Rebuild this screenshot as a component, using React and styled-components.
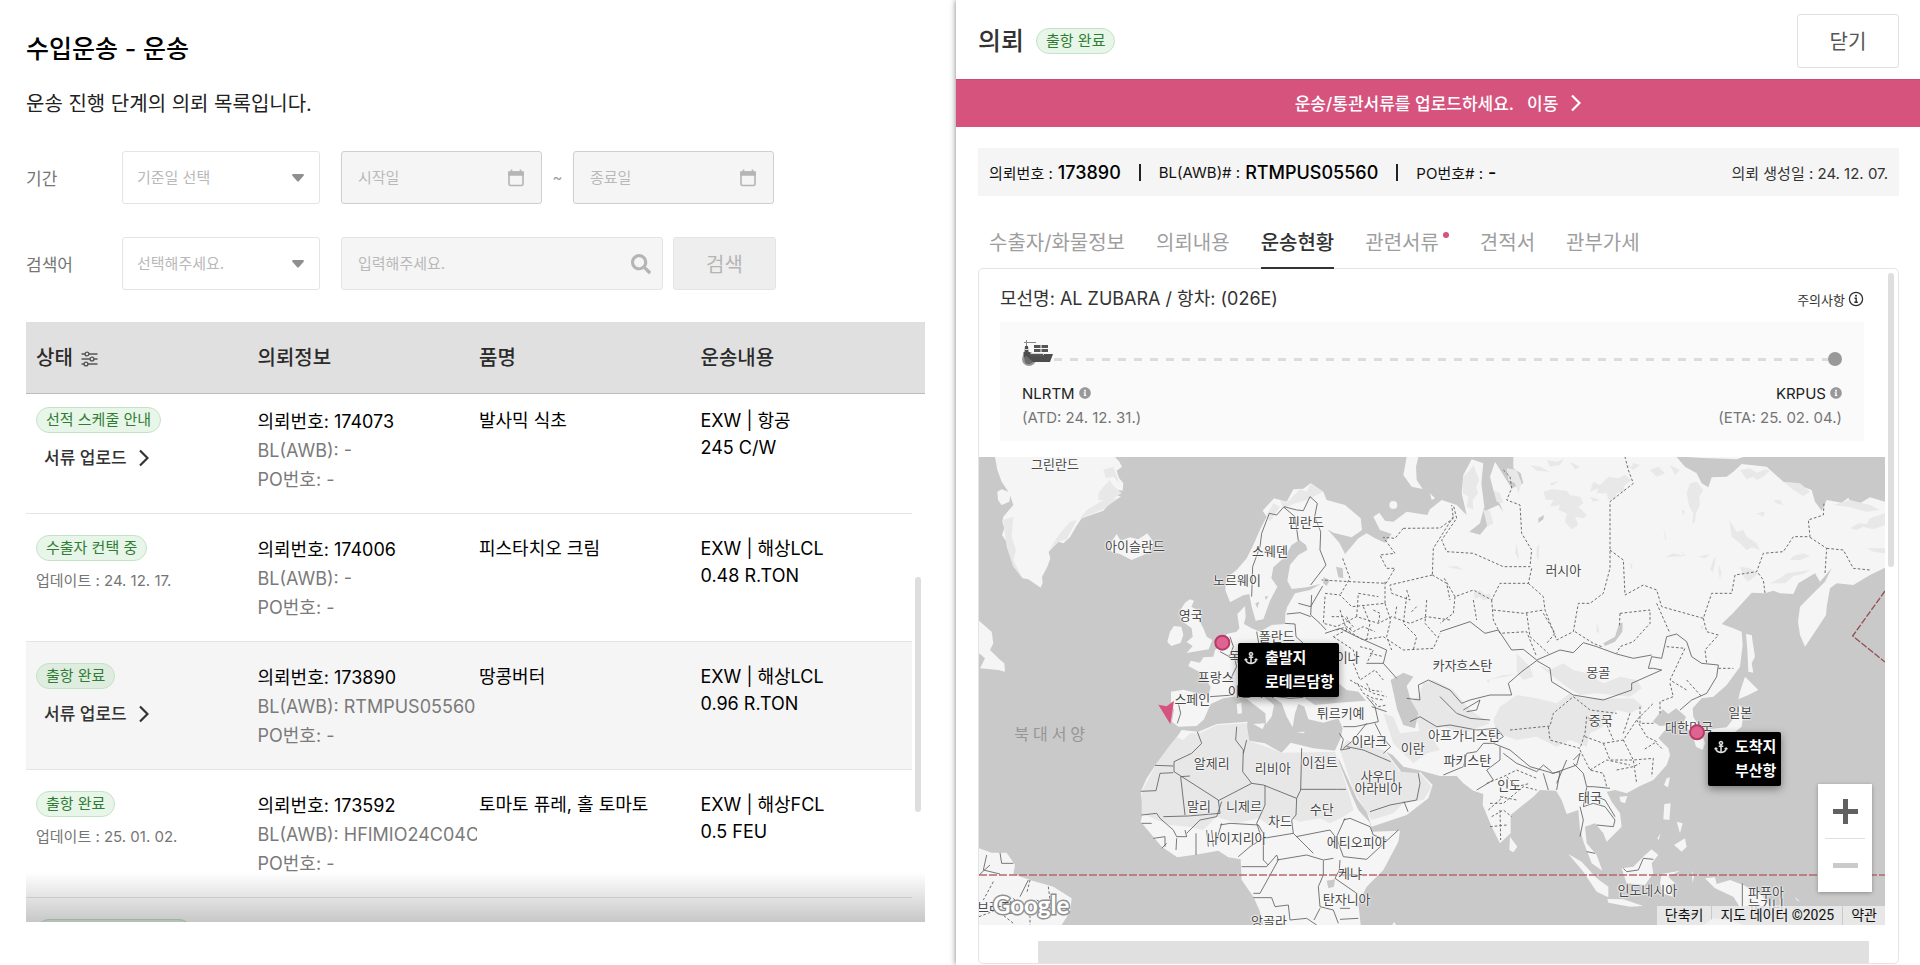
import React, { useState } from 'react';
import styled, { createGlobalStyle, css } from 'styled-components';
import { FaAnchor, FaInfoCircle, FaSearch } from 'react-icons/fa';

const GlobalStyle = createGlobalStyle`
  * {
    box-sizing: border-box;
  }
  body {
    margin: 0;
    background: #fff;
    color: #212121;
    font-family: Inter, 'Noto Sans CJK KR', sans-serif;
    font-size: 17px;
  }
  button,
  input,
  select {
    font-family: inherit;
  }
`;

const Layout = styled.div`
  display: grid;
  grid-template-columns: minmax(0, 956fr) minmax(0, 964fr);
  height: 100vh;
  min-height: 700px;
  overflow: hidden;
`;

/* ---------- list side ---------- */

const ListPane = styled.main`
  display: flex;
  flex-direction: column;
  min-height: 0;
  padding: 31px 31px 43px 26px;
`;

const PageTitle = styled.h1`
  margin: 0;
  font-size: 25px;
  line-height: 36px;
  font-weight: 500;
  color: #000;
`;

const PageLead = styled.p`
  margin: 23px 0 33px;
  font-size: 20px;
  line-height: 28px;
`;

const Filters = styled.form`
  display: flex;
  flex-direction: column;
  gap: 33px;
  margin-bottom: 32px;
`;

const FilterRow = styled.div`
  display: flex;
  align-items: center;
`;

const FilterLabel = styled.label`
  flex: 0 0 96px;
  color: #757575;
`;

const Field = styled.div`
  position: relative;
  flex: 0 1 ${(p) => p.$width}px;
  height: 53px;
  margin-right: ${(p) => p.$gap || 0}px;
  svg {
    position: absolute;
    top: 50%;
    right: ${(p) => p.$iconRight || 16}px;
    transform: translateY(-50%);
    color: ${(p) => p.$iconColor || '#b5b5b5'};
    pointer-events: none;
  }
`;

const controlBase = css`
  width: 100%;
  height: 100%;
  padding: 0 16px;
  border: 1px solid #e4e4e4;
  border-radius: 3px;
  font-size: 15px;
  color: #b9b9b9;
  opacity: 1;
`;

const Select = styled.select`
  ${controlBase}
  padding: 0 14px;
  appearance: none;
  background: #fff;
`;

const TextInput = styled.input`
  ${controlBase}
  background: #f5f5f5;
  border-color: ${(p) => (p.$strong ? '#cfcfcf' : '#e4e4e4')};
  &::placeholder {
    color: #b9b9b9;
    opacity: 1;
  }
`;

const Tilde = styled.span`
  flex: 0 0 31px;
  text-align: center;
  font-size: 15px;
  color: #9e9e9e;
`;

const SearchButton = styled.button`
  width: 103px;
  height: 53px;
  border: 1px solid #e4e4e4;
  border-radius: 3px;
  background: #eee;
  color: #b5b5b5;
  font-size: 20px;
`;

const TableBox = styled.section`
  position: relative;
  flex: 1;
  min-height: 0;
  overflow: hidden;
  &::after {
    content: '';
    position: absolute;
    inset: auto 0 0 0;
    height: 50px;
    background: linear-gradient(rgba(0, 0, 0, 0), rgba(0, 0, 0, 0.22));
  }
`;

const Table = styled.table`
  width: 100%;
  table-layout: fixed;
  border-collapse: separate;
  border-spacing: 0;
  text-align: left;
`;

const Th = styled.th`
  height: 72px;
  padding: 0 0 2px 10px;
  border-bottom: 1px solid #bdbdbd;
  background: #e0e0e0;
  color: #2b2b2b;
  font-size: 20px;
  font-weight: 500;
  svg {
    margin-left: 8px;
    vertical-align: -2px;
  }
`;

const ThGutter = styled.td`
  width: 13px;
  padding: 0;
  border-bottom: 1px solid #bdbdbd;
  background: #e0e0e0;
`;

const Td = styled.td`
  height: 128px;
  padding: 21px 0 0 10px;
  border-bottom: 1px solid #e4e4e4;
  vertical-align: top;
  font-size: 18px;
  line-height: 27px;
  color: #000;
`;

const Tr = styled.tr`
  background: ${(p) => (p.$selected ? '#f5f5f5' : '#fff')};
  &:first-child ${Td} {
    height: 120px;
    padding-top: 13px;
  }
`;

const Badge = styled.span`
  display: block;
  width: fit-content;
  min-width: ${(p) => p.$minWidth || 0}px;
  height: 26px;
  padding: 0 9px;
  border: 1px solid #c3e3c6;
  border-radius: 13px;
  background: ${(p) => (p.$dim ? '#deeddf' : '#e8f5e9')};
  color: #2e7d32;
  font-size: 15px;
  line-height: 24px;
  white-space: nowrap;
`;

const Updated = styled.div`
  margin-top: 8px;
  font-size: 15px;
  line-height: 24px;
  color: #757575;
`;

const UploadLink = styled.a`
  display: flex;
  align-items: center;
  gap: 12px;
  width: fit-content;
  margin-top: 12px;
  padding-left: 8px;
  font-size: 17px;
  line-height: 26px;
  font-weight: 500;
  color: #333;
  text-decoration: none;
`;

const InfoLine = styled.div`
  margin-right: -8px;
  overflow: hidden;
  white-space: nowrap;
  line-height: 29px;
  color: ${(p) => (p.$main ? '#000' : '#7a7a7a')};
`;

const Thumb = styled.div`
  position: absolute;
  top: ${(p) => p.$top}px;
  right: 4px;
  width: 6px;
  height: ${(p) => p.$height}px;
  border-radius: 3px;
  background: #dedede;
`;

/* ---------- detail side ---------- */

const DetailPane = styled.aside`
  display: flex;
  flex-direction: column;
  min-height: 0;
  background: #fff;
  box-shadow: 0 0 6px rgba(0, 0, 0, 0.5);
  z-index: 1;
`;

const DetailHead = styled.header`
  display: flex;
  align-items: center;
  gap: 12px;
  height: 79px;
  flex: none;
  padding: 2px 21px 0 22px;
`;

const DetailTitle = styled.h2`
  margin: 0;
  font-size: 25px;
  line-height: 36px;
  font-weight: 500;
  color: #333;
`;

const CloseButton = styled.button`
  width: 102px;
  height: 54px;
  margin-left: auto;
  border: 1px solid #e0e0e0;
  border-radius: 3px;
  background: #fff;
  color: #555;
  font-size: 20px;
`;

const Banner = styled.a`
  display: flex;
  align-items: center;
  justify-content: center;
  gap: 13px;
  flex: none;
  height: 48px;
  padding-bottom: 2px;
  border-top: 1px solid #c64c76;
  background: #d6537e;
  color: #fff;
  font-weight: 500;
  text-decoration: none;
`;

const Summary = styled.div`
  display: flex;
  align-items: center;
  flex: none;
  height: 48px;
  margin: 21px 21px 0 22px;
  padding: 0 11px;
  background: #f5f5f5;
  font-size: 15px;
  color: #111;
  white-space: nowrap;
  strong {
    margin-left: 5px;
    font-size: 18px;
    font-weight: 500;
    color: #000;
  }
`;

const SummaryItem = styled.span`
  display: flex;
  align-items: center;
  & + & {
    margin-left: 18px;
  }
  & + &::before {
    content: '';
    width: 2px;
    height: 17px;
    margin-right: 18px;
    background: #222;
  }
`;

const Created = styled.span`
  margin-left: auto;
  color: #333;
`;

const Tabs = styled.div`
  display: flex;
  gap: 31px;
  flex: none;
  height: 53px;
  margin: 20px 21px -1px 22px;
  padding-left: 11px;
  z-index: 1;
`;

const Tab = styled.button`
  padding: 0;
  border: 0;
  border-bottom: 2px solid ${(p) => (p.$active ? '#333' : 'transparent')};
  background: none;
  font-size: 20px;
  font-weight: ${(p) => (p.$active ? 500 : 400)};
  color: ${(p) => (p.$active ? '#333' : '#9e9e9e')};
  cursor: pointer;
`;

const NewDot = styled.i`
  display: inline-block;
  width: 6px;
  height: 6px;
  margin-left: 4px;
  border-radius: 50%;
  background: #d6537e;
  vertical-align: 12px;
`;

const Card = styled.section`
  position: relative;
  flex: 1;
  min-height: 0;
  margin: 0 21px 1px 22px;
  padding-right: 13px;
  border: 1px solid #e4e4e4;
  border-radius: 5px;
  overflow: hidden;
`;

const VesselRow = styled.div`
  display: flex;
  justify-content: space-between;
  align-items: center;
  padding: 14px 21px 7px;
  font-size: 18px;
  line-height: 32px;
  color: #333;
`;

const NoticeButton = styled.button`
  display: flex;
  align-items: center;
  gap: 3px;
  padding: 0;
  border: 0;
  background: none;
  font-size: 13px;
  color: #333;
`;

const Route = styled.div`
  margin: 0 21px 16px;
  padding: 30px 22px 11px;
  background: #fafafa;
`;

const Track = styled.div`
  display: flex;
  align-items: center;
  height: 14px;
  margin-bottom: 16px;
`;

const ShipIcon = styled.svg`
  flex: none;
  width: 32px;
  height: 26px;
  margin-top: -12px;
`;

const Dashes = styled.div`
  flex: 1;
  height: 3px;
  background: repeating-linear-gradient(90deg, #dcdcdc 0 8px, transparent 8px 16px);
`;

const EndDot = styled.span`
  width: 14px;
  height: 14px;
  border-radius: 50%;
  background: #999;
`;

const Ports = styled.div`
  display: flex;
  justify-content: space-between;
  font-size: 15px;
  line-height: 24px;
  color: #757575;
`;

const Port = styled.div`
  text-align: ${(p) => p.$align || 'left'};
  strong {
    display: block;
    font-weight: 400;
    color: #212121;
  }
  svg {
    margin-left: 4px;
    font-size: 12px;
    color: #999;
  }
`;

const MapBox = styled.div`
  position: relative;
  width: 100%;
  aspect-ratio: 906 / 468;
  overflow: hidden;
  background: #c9c9c9;
`;

const MapSvg = styled.svg`
  display: block;
  width: 100%;
  height: 100%;
  stroke-linejoin: round;
`;

const MapLabel = styled.span`
  position: absolute;
  left: ${(p) => ((p.$x - 27) / 2718) * 100}%;
  top: ${(p) => ((p.$y - 21) / 1404) * 100}%;
  transform: translate(-50%, -50%);
  font-family: Roboto, 'Noto Sans CJK KR', sans-serif;
  font-size: ${(p) => (p.$sea ? 16 : 13)}px;
  line-height: 12px;
  letter-spacing: ${(p) => (p.$sea ? 4 : 0)}px;
  text-align: center;
  white-space: pre;
  color: ${(p) => (p.$sea ? '#969696' : '#4a4a4a')};
  text-shadow: ${(p) => (p.$sea ? 'none' : '0 0 2px #fff, 0 0 2px #fff, 0 0 2px #fff')};
`;

const PortPopup = styled.div`
  position: absolute;
  left: ${(p) => ((p.$x - 27) / 2718) * 100}%;
  top: ${(p) => ((p.$y - 21) / 1404) * 100}%;
  display: flex;
  gap: 7px;
  padding: 3px 5px 3px 6px;
  border-radius: 2px;
  background: #000;
  box-shadow: 0 3px 8px rgba(0, 0, 0, 0.4);
  color: #fff;
  font-size: 15px;
  font-weight: 600;
  line-height: 24px;
  white-space: nowrap;
  svg {
    margin-top: 5px;
    font-size: 14px;
    color: #ddd;
  }
`;

const ZoomControl = styled.div`
  position: absolute;
  right: 13px;
  bottom: 33px;
  width: 54px;
  background: #fff;
  box-shadow: 0 1px 4px rgba(0, 0, 0, 0.3);
`;

const ZoomButton = styled.button`
  display: flex;
  align-items: center;
  justify-content: center;
  width: 40px;
  height: 54px;
  margin: 0 7px;
  padding: 0;
  border: 0;
  background: none;
  color: ${(p) => (p.disabled ? '#cacaca' : '#616161')};
  & + & {
    border-top: 1px solid #e0e0e0;
  }
`;

const GoogleMark = styled.span`
  position: absolute;
  left: 14px;
  bottom: 4px;
  font-family: Lato, sans-serif;
  font-size: 24px;
  line-height: 32px;
  font-weight: 700;
  color: #fff;
  -webkit-text-stroke: 3px #909090;
  paint-order: stroke fill;
`;

const Attribution = styled.div`
  position: absolute;
  right: 0;
  bottom: 0;
  display: flex;
  gap: 1px;
  font-family: Roboto, 'Noto Sans CJK KR', sans-serif;
  font-size: 14px;
  line-height: 19px;
  span,
  a {
    padding: 0 8px;
    background: rgba(240, 240, 240, 0.75);
    color: #111;
    text-decoration: none;
  }
`;

const NextBlock = styled.div`
  height: 240px;
  margin: 16px 16px 0 59px;
  background: #e0e0e0;
`;

/* ---------- icons ---------- */

const Caret = () => (
  <svg width="12" height="8" viewBox="0 0 12 8" aria-hidden="true">
    <path d="M1 0h10q1.500 .6 .6 1.800L7 7q-1 1-2 0L.4 1.800Q-.4 .6 1 0z" fill="currentColor" />
  </svg>
);

const CalendarIcon = () => (
  <svg width="16" height="18" viewBox="0 0 16 18" aria-hidden="true">
    <rect x="1" y="3" width="14" height="13.500" rx="1.500" fill="none" stroke="currentColor" strokeWidth="1.600" />
    <path d="M1 3h14v3H1zM3.500 .5v3M12.500 .5v3" fill="currentColor" stroke="currentColor" strokeWidth="1.600" />
  </svg>
);

const SlidersIcon = () => (
  <svg width="17" height="16" viewBox="0 0 17 16" fill="none" stroke="#555" strokeWidth="1.400" aria-hidden="true">
    <path d="M.5 3H4M8 3h8.500M.5 8H9M13 8h3.500M.5 13H3M7 13h9.500" />
    <circle cx="6" cy="3" r="1.900" />
    <circle cx="11" cy="8" r="1.900" />
    <circle cx="5" cy="13" r="1.900" />
  </svg>
);

const Chevron = () => (
  <svg width="10" height="18" viewBox="0 0 10 18" fill="none" stroke="currentColor" strokeWidth="2.200" aria-hidden="true">
    <path d="M1 1.500L8.500 9 1 16.500" />
  </svg>
);

const NoticeIcon = () => (
  <svg width="16" height="16" viewBox="0 0 16 16" fill="none" stroke="#333" aria-hidden="true">
    <circle cx="8" cy="8" r="6.600" strokeWidth="1.300" />
    <path d="M6.500 7.200H8.200V11M6.300 11.200h3.600" strokeWidth="1.400" />
    <circle cx="8" cy="4.800" r="1" fill="#333" stroke="none" />
  </svg>
);

const Ship = () => (
  <ShipIcon viewBox="0 0 32 26" aria-hidden="true">
    <circle cx="7" cy="19" r="7" fill="#999" />
    <path d="M4.500 0v8M2 2.500h12" stroke="#888" strokeWidth="1" fill="none" />
    <path d="M3 6h3l.6 6h1.400l1 3.500h12l1-1.500h9L28 22H4L1.500 15V12h1z" fill="#4d4d4d" />
    <path d="M12 5h6.500v3H12zM19.500 5H26v3h-6.500zM12 9h6.500v3H12zM19.500 9H26v3h-6.500zM9 13h12v3H9z" fill="#555" />
    <path d="M3 9.500h3.500M9 13.500h13" stroke="#e4e4e4" strokeWidth=".9" />
    <path d="M4 15.500a7 7 0 0 0 0 8a6 6 0 0 0 7-1.500z" fill="#6b6b6b" />
  </ShipIcon>
);

/* ---------- map shapes ---------- */

const LAND = [
  // Greenland
  'M75 21L82 60 95 95 118 130 130 165 100 200 97 215 103 235 96 255 112 280 114 300 122 318 135 355 158 385 175 388 200 405 212 413 218 398 216 380 232 350 241 325 236 305 265 275 280 280 300 262 318 230 335 205 400 182 420 160 453 140 430 132 400 125 430 118 458 122 460 100 447 84 440 62 456 50 448 35 435 21Z',
  'M82 125L95 118 122 128 118 155 95 165 84 150Z',
  // Iceland
  'M418 285L440 252 452 272 480 262 505 268 532 250 550 275 545 300 520 315 485 330 450 312 425 306Z',
  // British Isles
  'M628 485L645 458 660 448 672 452 664 470 695 488 690 515 700 535 710 560 727 570 716 598 680 604 650 609 668 588 650 576 668 560 665 535 645 520 634 508Z',
  'M600 545L612 528 634 530 640 555 632 578 604 588 592 575Z',
  // Eurasia
  'M625 830L606 815 612 780 603 755 603 725 640 719 715 738 722 712 700 672 655 648 662 632 690 638 700 622 730 620 735 600 755 585 770 552 800 545 808 535 802 492 825 468 827 500 822 522 845 535 870 545 905 525 945 522 946 490 952 470 975 430 1020 420 1052 402 1010 412 965 417 952 392 960 345 985 315 1012 300 1008 285 988 270 965 285 945 320 910 352 904 385 922 410 900 452 880 508 857 512 845 470 838 432 820 436 780 457 766 420 768 385 800 360 830 325 850 285 872 235 890 200 878 182 912 145 950 155 970 118 1000 116 1022 100 1060 125 1070 150 1125 165 1172 205 1176 240 1145 262 1090 248 1072 238 1108 278 1125 312 1140 295 1165 265 1190 250 1215 265 1245 278 1265 252 1230 240 1210 200 1228 188 1245 212 1270 215 1310 185 1372 195 1380 178 1415 150 1460 165 1490 195 1475 130 1480 75 1505 28 1540 40 1534 100 1543 170 1530 220 1498 245 1530 254 1562 215 1552 180 1585 165 1600 185 1570 120 1560 80 1575 35 1600 75 1625 115 1660 100 1652 70 1630 55 1630 21 2120 21 2145 50 2180 70 2195 100 2215 112 2225 82 2270 80 2290 65 2315 42 2390 50 2440 95 2485 105 2525 120 2535 155 2555 182 2570 150 2615 158 2635 143 2650 172 2700 142 2745 155 2745 353 2700 375 2650 405 2600 400 2580 415 2570 470 2568 495 2545 530 2505 590 2490 555 2484 515 2490 470 2530 430 2565 395 2585 355 2550 395 2535 370 2485 400 2470 432 2430 430 2410 422 2385 430 2345 428 2290 488 2255 522 2290 535 2315 545 2318 585 2310 650 2270 705 2230 740 2195 745 2168 775 2170 800 2190 835 2205 880 2198 900 2178 890 2168 855 2140 820 2148 800 2118 775 2095 792 2078 778 2060 800 2048 815 2070 828 2098 825 2065 865 2095 895 2100 915 2090 945 2050 990 2010 1008 1970 1030 1935 1020 1910 1025 1925 1055 1950 1090 1955 1130 1910 1175 1900 1150 1875 1120 1845 1130 1850 1180 1880 1215 1897 1262 1865 1240 1842 1180 1830 1140 1825 1080 1790 1092 1775 1050 1758 1022 1710 1020 1690 1040 1622 1095 1622 1150 1590 1180 1565 1130 1538 1065 1540 1032 1510 1022 1480 1000 1460 978 1410 978 1345 960 1300 950 1268 915 1248 905 1290 960 1305 990 1335 988 1350 965 1388 1005 1375 1045 1310 1095 1205 1130 1190 1085 1160 1045 1108 930 1090 912 1112 865 1118 835 1105 805 1060 818 1015 808 1003 770 985 762 975 790 968 832 950 800 935 760 885 725 868 705 862 725 912 765 905 800 888 822 886 790 845 758 820 738 790 740 760 745 722 762 702 808 680 828Z',
  // Africa
  'M635 840L685 845 740 822 832 815 830 850 838 872 885 880 935 908 962 878 1030 895 1098 902 1108 940 1145 1035 1165 1080 1200 1118 1205 1145 1290 1142 1285 1175 1240 1260 1190 1310 1165 1360 1172 1425 880 1425 868 1380 850 1340 815 1290 812 1228 775 1222 745 1202 690 1212 622 1222 575 1190 512 1115 520 1080 512 1025 530 985 560 940 600 890Z',
  // Mediterranean islands
  'M800 762L814 758 816 790 803 792ZM850 822L885 820 878 838Z',
  'M980 846L1005 845 1000 850Z',
  // Novaya Zemlya and neighbours
  'M1310 21L1300 75 1325 110 1358 117 1340 90 1338 50 1345 21ZM1380 130L1395 145 1385 150ZM1258 165a12 12 0 1 0 24 0a12 12 0 1 0-24 0Z',
  'M2150 21L2320 21 2300 28 2200 24Z',
  // Sakhalin, Japan
  'M2328 552L2345 555 2355 620 2345 640 2350 668 2335 665 2332 600ZM2325 680L2365 720 2335 735 2305 748 2310 725Z',
  'M2308 765L2322 780 2315 830 2290 850 2225 850 2215 838 2270 832 2295 800Z',
  // south-east Asia
  'M2090 985L2100 982 2094 1012 2082 1005ZM1948 1040L1972 1038 1965 1060 1952 1055Z',
  'M2083 1062L2102 1060 2098 1110 2080 1108ZM2120 1115L2138 1120 2130 1150ZM2112 1185L2145 1165 2150 1190 2135 1205ZM2062 1165L2072 1150 2066 1170Z',
  'M1620 1160L1642 1190 1630 1207 1618 1200Z',
  'M1795 1212L1835 1235 1880 1285 1915 1310 1915 1342 1880 1325 1840 1265Z',
  'M1912 1347L1960 1348 2020 1368 1980 1370 1915 1358Z',
  'M1955 1255L1990 1250 2025 1215 2045 1198 2065 1215 2045 1240 2050 1270 2025 1305 1970 1300Z',
  'M2075 1272L2130 1262 2095 1280 2115 1300 2098 1305 2108 1340 2078 1330 2070 1300ZM2165 1262L2172 1280 2168 1300Z',
  'M2205 1285L2235 1282 2240 1302 2280 1290 2320 1305 2375 1335 2400 1370 2350 1365 2310 1372 2290 1340 2235 1315Z',
  'M2200 1425L2230 1405 2290 1412 2320 1425ZM2475 1340L2490 1355 2480 1350Z',
  'M1267 1425L1272 1415 1278 1425Z',
  // Newfoundland
  'M27 512L65 545 70 580 60 600 85 625 103 640 105 665 85 660 30 655 45 625 27 610Z',
  // South America
  'M27 1195L65 1208 110 1208 135 1245 130 1272 180 1290 250 1310 305 1345 300 1385 275 1425 27 1425Z',
];

const ARID = [
  'M600 885L620 862 640 870 660 850 690 850 740 825 830 820 838 872 935 908 1095 905 1140 1040 1150 1080 1120 1100 1080 1120 1050 1105 990 1115 950 1100 905 1130 890 1120 865 1105 800 1120 740 1100 700 1140 655 1130 600 1125 560 1110 515 1090 515 1025 560 940Z',
  'M1110 900L1130 870 1240 900 1290 965 1350 970 1385 1010 1360 1050 1300 1060 1270 1090 1205 1110 1150 1020Z',
  'M1310 760L1345 740 1360 700 1390 690 1450 720 1500 780 1560 820 1480 850 1420 830 1350 850 1340 800Z',
  'M1580 850L1570 810 1590 770 1640 735 1700 745 1760 760 1800 730 1840 745 1990 745 2020 770 1980 790 1940 780 1900 830 1860 850 1850 890 1800 870 1760 890 1700 860 1640 870Z',
  'M1705 645L1740 660 1780 640 1810 660 1850 670 1900 700 1950 680 2000 690 2015 715 1980 740 1880 730 1830 735 1790 710Z',
  'M1240 790L1270 800 1290 850 1370 840 1410 900 1370 910 1330 940 1290 900 1270 880Z',
];

// relief flecks, a little lighter than the desert areas
const RELIEF = [
  'M1720 125L1745 118 1790 122 1800 135 1830 140 1840 160 1825 170 1850 195 1840 205 1815 200 1825 225 1805 238 1785 215 1790 190 1765 180 1770 165 1740 170 1750 150 1728 150Z',
  'M1870 95L1890 105 1915 80 1945 85 1965 75 1985 90 1960 110 1965 125 1940 130 1935 150 1915 150 1910 130 1880 130 1885 115 1860 125Z',
  'M1480 80L1500 60 1510 45 1528 90 1518 110 1525 130 1508 150 1510 178 1490 170 1495 140 1478 130Z',
  'M2150 130L2160 100 2180 95 2200 120 2188 140 2190 165 2178 190 2175 215 2166 222 2170 190 2158 170Z',
  'M2278 210L2300 245 2320 240 2330 260 2360 280 2370 300 2345 292 2330 300 2305 275 2285 260Z',
  'M2310 60L2340 55 2360 68 2385 58 2400 62 2380 80 2360 90 2350 80 2330 88ZM2440 95L2490 100 2520 125 2500 138 2470 120Z',
  'M2640 235L2665 220 2690 222 2700 205 2745 190 2745 225 2710 238 2680 230 2660 240ZM2590 165L2640 150 2700 165 2730 180 2690 185 2640 172ZM2690 295L2745 295 2745 310 2710 305Z',
  'M2400 400L2430 385 2450 370 2480 365 2520 360 2500 372 2470 378 2445 400ZM2310 350L2340 355 2365 370 2335 395 2320 380Z',
  'M385 130L400 110 420 90 428 105 455 130 430 145 400 170 408 150 385 150ZM400 60L430 50 448 100 430 80 408 85Z',
  'M100 210L130 200 125 260 138 300 130 330 155 380 130 350 110 290ZM240 300L265 275 290 268 320 210 300 215 270 250 250 280ZM330 205L400 178 445 145 400 150 350 180Z',
  'M930 150L950 158 990 118 1010 125 1022 102 1060 125 1040 135 1010 150 975 160 940 175ZM890 195L910 160 930 170 900 215Z',
  'M1510 430L1530 420 1545 435 1560 430 1565 445 1540 450 1528 440 1515 448ZM1430 350L1460 348 1480 360 1450 355ZM1540 180L1560 182 1570 220 1552 230Z',
  'M1610 55L1640 60 1655 100 1645 130 1635 100 1615 90ZM1570 120L1590 130 1600 160 1580 155Z',
  'M1730 30L1760 35 1780 28 1770 45 1740 50ZM1680 45L1710 50 1740 65 1700 62ZM1800 35L1830 50 1815 58ZM1960 40L1985 50 1990 38 2010 45 1990 60ZM2040 60L2065 50 2085 70 2060 80ZM2100 45L2130 60 2115 75Z',
  'M2080 230L2090 270 2085 268ZM2120 290L2150 320 2140 315 2130 300ZM2085 322L2145 318 2110 310ZM2135 180L2145 182 2140 195ZM2185 320L2220 312 2205 325ZM2248 345L2254 370 2250 388 2245 360Z',
  'M1740 100L1770 92 1745 107ZM1860 140L1890 150 1870 155ZM1700 290L1708 285 1706 330 1700 320ZM1640 280L1635 310 1648 330ZM1880 520L1885 530 1888 550 1880 545ZM1980 340L1988 345 1984 360ZM2190 530L2200 525 2198 540Z',
  'M1640 610L1680 650 1690 680 1660 690 1640 665ZM1550 690L1600 675 1640 672 1600 682 1560 688 1555 700ZM1410 770L1450 760 1490 790 1460 800Z',
  'M2460 330L2470 318 2500 310 2520 318 2490 330ZM2360 190L2385 185 2380 200ZM2410 150L2430 150 2440 165 2420 160ZM2220 360L2230 330 2238 320 2230 365Z',
];

const LAKES = [
  // Black Sea, Caspian, Aral, Baikal, Victoria
  'M1008 712L1060 692 1100 695 1130 720 1165 725 1188 752 1105 758 1035 765 1005 745Z',
  'M1262 690L1300 668 1330 680 1310 708 1322 750 1345 790 1335 835 1300 825 1282 780Z',
  'M1900 580L1935 560 1948 520 1958 518 1957 545 1935 575 1905 588Z',
  'M1070 1292L1095 1288 1092 1310 1075 1315ZM1098 350L1118 355 1120 385 1105 382ZM1060 382L1080 390 1070 408 1060 400Z',
  'M1705 205L1722 195 1720 208 1705 218ZM856 460L868 455 862 475ZM884 440L895 438 888 450Z',
];

const COUNTRY_LINES = [
  // Scandinavia
  'M845 440L848 350 870 290 875 250 898 190 920 195 942 170 980 180 1000 182 1020 140 1042 160 1034 200 1052 245 1050 300 1068 345 1022 405',
  'M942 172L975 200 985 272',
  // Baltics and eastern Europe
  'M985 460L1022 470 1058 408M950 492L990 488 1022 500M1025 435L1022 495 1050 520 1068 540M945 520L975 522 978 560 1000 580M1065 550L1110 535 1160 560 1250 600 1240 640 1190 640',
  'M780 560L790 590 778 620 750 605M860 545L868 590 900 600 980 580M790 610L800 650 780 690M720 740L790 735M625 760L632 790 622 820M920 740L960 745 1000 742',
  // Caucasus, Turkey, Levant
  'M1190 740L1215 770 1225 815 1155 830 1120 830M1205 770L1250 785M1120 895L1145 875 1190 820M1215 820L1235 860 1262 890 1240 910M1130 890L1180 900 1262 935M1108 850L1120 868 1112 900 1140 895',
  'M1200 1085L1260 1065 1340 1050 1350 1000 1345 970M1302 1055L1314 1085',
  // Africa
  'M682 845L695 880 665 910 612 935 612 965 745 1050 750 1090 655 1098 580 1100M555 946L610 948M610 968L570 970 558 1022 512 1024M632 980L645 1095M632 980L660 978M745 1052L845 1000 880 1005 980 1045',
  'M800 830L797 870 820 900 818 965 845 1000M830 870L820 910M995 895L992 1020 980 1045 978 1095M992 1018L1100 1018 1128 1018M885 1005L885 1065 860 1120 870 1150',
  'M650 1150L690 1110 740 1100 755 1055M750 1125L780 1120 865 1125 880 1150M515 1095L560 1090 570 1105 610 1140 620 1160M515 1120L545 1120M620 1160L650 1160 645 1140M620 1165L618 1200M678 1150L678 1215M710 1140L715 1190M725 1140L730 1190 M550 1165L585 1160 585 1190M575 1195L590 1180',
  'M740 1170L755 1120M805 1220L840 1190 880 1165 970 1150 965 1110 978 1095M880 1170L880 1230 895 1245M815 1250L890 1250 920 1215 925 1230 870 1330 850 1330M920 1230L1010 1215 1060 1230 1090 1225M970 1150L1030 1210M978 1160L1080 1140 1100 1165 1120 1220 1190 1228 1285 1140M1120 1110L1140 1105 1200 1130 1210 1155 1250 1170M1125 1105L1100 1160M1060 1232L1060 1275 1045 1310 1050 1370 1090 1380M1110 1230L1108 1260 1095 1285 1160 1330M850 1343L905 1343 915 1370 955 1365 960 1410 1010 1405 1040 1425M1050 1375L1032 1410M1090 1380L1105 1420M1110 1408L1165 1405M1110 1375L1140 1375',
  // central Asia
  'M1240 640L1280 685M1310 745L1350 750 1345 705 1375 690 1440 720 1475 760 1500 750 1560 735 1625 735 1615 700 1655 665 1700 632 1740 655 1745 695 1810 735 1900 750 1985 720 1985 700 2075 660 2050 655 2035 655 2045 620 2075 625 2090 560 2120 552 2150 575 2165 620 2195 640 2245 645 2240 680 2210 730 2165 750 2130 780',
  'M1410 545L1500 515 1545 550 1585 540 1625 600 1660 598 1700 630 1770 600 1810 608 1840 578 1880 590 1940 612 1990 625 2045 615',
  'M1320 815L1350 800 1400 830 1440 825 1520 840 1580 835 1600 860 1570 880 1540 880 1520 905 1490 910 1480 950 1420 975M1410 740L1460 790 1500 805 1560 810M1480 780L1530 750 1520 780 1490 785',
  'M1570 880L1620 900 1680 950 1750 970 1820 945 1830 910 1810 930M1600 910L1640 940 1700 965 1720 945 1745 965M1590 890L1590 930 1550 960 1570 990 1520 1020M1720 970L1735 1020M1745 970L1770 965 1760 1020M1790 930L1760 1000M1810 940L1840 970 1850 1010 1870 1010 1920 1015M1850 1012L1840 1070 1870 1060 1905 1070 1935 1110 1930 1130 1880 1125M1830 1160L1840 1110 1830 1070M1880 1040L1905 1050 1935 1100M1850 1205L1875 1210M1960 1255L1970 1265 2005 1260 2020 1225 2050 1228M2317 1300L2317 1372',
  'M50 1215L40 1260 90 1272M90 1208L95 1240 130 1240M27 1275L60 1245M175 1290L150 1340',
];

const PROVINCE_LINES = [
  'M1300 235L1410 234 1450 205 1445 165M1450 200L1390 295 1387 375M1300 235L1275 265 1240 262 1275 310 1230 315 1250 355 1275 355 1248 400 1140 395 1055 390M1118 325L1140 385 1112 432M1387 375L1260 405 1265 430 1320 450 1310 420M1387 375L1430 400 1440 450',
  'M1065 430L1110 435 1145 470 1245 460 1245 390M1065 440L1060 520 1100 530 1160 500 1225 520 1265 500 1320 520 1370 500 1440 510M1110 480L1130 540 1180 570 1240 560 1300 600 1390 595 1410 550M1180 470L1200 520 1190 570M1245 460L1262 510 1250 560 1265 600M1310 440L1300 520 1340 560 1330 600M1085 500L1120 500 1150 530 1090 560M1370 450L1365 520 1400 560M1160 500L1165 430 1225 440M1130 500L1140 520',
  'M1150 640L1170 690 1215 660 1240 690M1160 700L1210 730 1250 740M1090 560L1150 600 1160 640M1200 610L1240 620M1170 590L1210 600 1190 640M1140 690L1165 705 1180 730 1210 745 1240 750M1190 700L1200 720 1235 725M1205 750L1225 770 1250 765M1100 540L1130 530 1150 545 1180 530 1215 545M1210 480L1230 490 1225 520M1280 470L1275 500M1340 470L1320 490',
  'M1600 60L1620 80 1625 115 1610 150 1650 165 1655 250 1685 300 1680 350 1600 350 1510 310 1430 305 1415 270 1460 205 1450 165M1685 355L1675 400 1590 400 1565 450 1510 420 1455 440 1420 380M1675 400L1720 440 1725 480 1760 570 1810 545 1825 460 1860 460 1900 430 1920 355 1920 155 1990 100 1975 60 1965 21',
  'M1920 300L1960 330 1965 435 2020 405 2060 420 2075 470 2200 505 2225 430 2285 430 2295 375 2360 365 2380 310 2440 305 2470 260 2520 260 2515 210 2560 195 2562 160M2520 262L2570 295 2565 370M2570 295L2620 300 2650 355 2700 360M2365 370L2380 390 2385 430M2060 460L2100 550M1950 490L2040 480 2040 520 1990 575 1950 590 1940 610M1950 490L1948 530M2200 505L2210 545 2245 555 2205 600 2210 640M2245 655L2290 655M1565 450L1570 510 1590 550 1670 545 1700 620M1455 440L1450 490 1410 520M1510 450L1520 510M1570 480L1660 490 1720 480M1670 490L1680 560 1735 610M1720 490L1755 550 1730 580M1815 545L1870 580 1895 590',
  'M1620 840L1740 828 1750 790 1810 740 1860 780 1940 790M1735 830L1740 870 1830 895 1845 850 1850 800 1890 830M1845 860L1900 880 1960 870 2000 810 2050 760M1830 900L1860 960 1900 970 1910 1010M1900 880L1920 930 1990 930 2000 1000M1960 870L1990 930 2050 925 2045 980M2000 810L2030 860 2060 875 2020 900M2010 770L2010 820 2050 820M2060 880L2080 900M1940 960L1990 950 2010 940M1980 790L1960 850 M2090 590L2145 595 2100 690 2150 720M2100 700L2110 740 2070 755 2070 790M2150 690L2195 740M1860 960L1910 930 1980 945M1900 800L1930 870',
  'M1550 1000L1600 980 1640 960 1700 985M1560 1060L1600 1060 1660 1010 1700 1020M1555 1080L1600 1040M1590 1040L1640 1050M1565 1100L1600 1080 1625 1100M1560 1130L1610 1125M1590 1080L1592 1170M1610 980L1640 1010 1680 1000',
  'M70 1295L40 1350M180 1290L170 1330M235 1310L240 1350M130 1345L180 1400 180 1425M200 1350L250 1380M27 1400L80 1380 130 1420',
];

const LABELS = [
  [255, 45, '그린란드'],
  [495, 292, '아이슬란드'],
  [1008, 220, '핀란드'],
  [900, 305, '스웨덴'],
  [801, 393, '노르웨이'],
  [662, 498, '영국'],
  [920, 562, '폴란드'],
  [812, 621, '독일'],
  [1079, 623, '우크라이나'],
  [737, 685, '프랑스'],
  [845, 727, '이탈리아'],
  [667, 751, '스페인'],
  [1112, 793, '튀르키예'],
  [1477, 647, '카자흐스탄'],
  [1885, 669, '몽골'],
  [1780, 364, '러시아'],
  [1892, 814, '중국'],
  [2311, 789, '일본'],
  [2157, 833, '대한민국'],
  [725, 941, '알제리'],
  [908, 958, '리비아'],
  [1049, 938, '이집트'],
  [1198, 876, '이라크'],
  [1328, 896, '이란'],
  [1482, 858, '아프가니스탄'],
  [1492, 933, '파키스탄'],
  [1225, 1000, '사우디\n아라비아'],
  [687, 1071, '말리'],
  [822, 1071, '니제르'],
  [930, 1116, '차드'],
  [1055, 1079, '수단'],
  [800, 1166, '나이지리아'],
  [1160, 1178, '에티오피아'],
  [1140, 1272, '케냐'],
  [1130, 1350, '탄자니아'],
  [897, 1416, '앙골라'],
  [1618, 1009, '인도'],
  [1860, 1045, '태국'],
  [2032, 1324, '인도네시아'],
  [2388, 1348, '파푸아\n뉴기니'],
  [75, 1374, '브라질'],
];

const WorldMap = () => (
  <MapSvg viewBox="27 21 2718 1404" preserveAspectRatio="xMidYMid slice" role="img" aria-label="운송 경로 지도">
    <g fill="#f5f5f5">
      {LAND.map((d) => (
        <path key={d} d={d} />
      ))}
    </g>
    <g fill="#e7e7e7">
      {ARID.map((d) => (
        <path key={d} d={d} />
      ))}
    </g>
    <g fill="#e8e8e8">
      {RELIEF.map((d) => (
        <path key={d} d={d} />
      ))}
    </g>
    <g fill="#c9c9c9">
      {LAKES.map((d) => (
        <path key={d} d={d} />
      ))}
    </g>
    <g fill="none" stroke="#5e5e5e" strokeWidth="2.500">
      {COUNTRY_LINES.map((d) => (
        <path key={d} d={d} />
      ))}
    </g>
    <g fill="none" stroke="#6e6e6e" strokeWidth="3" strokeDasharray="8 6">
      {PROVINCE_LINES.map((d) => (
        <path key={d} d={d} />
      ))}
    </g>
    <path d="M27 1275H2745" stroke="#b56a6f" strokeWidth="5" strokeDasharray="24 6" />
    <path d="M2745 423L2648 558 2745 636" fill="none" stroke="#944f54" strokeWidth="4" strokeDasharray="20 5" />
  </MapSvg>
);

const Markers = styled(MapSvg)`
  position: absolute;
  inset: 0;
`;

const rows = [
  { id: '174073', status: '선적 스케줄 안내', upload: true, bl: '-', goods: '발사믹 식초', mode: 'EXW | 항공', amount: '245 C/W' },
  { id: '174006', status: '수출자 컨택 중', updated: '24. 12. 17.', bl: '-', goods: '피스타치오 크림', mode: 'EXW | 해상LCL', amount: '0.48 R.TON' },
  { id: '173890', status: '출항 완료', upload: true, selected: true, bl: 'RTMPUS05560', goods: '땅콩버터', mode: 'EXW | 해상LCL', amount: '0.96 R.TON' },
  { id: '173592', status: '출항 완료', updated: '25. 01. 02.', bl: 'HFIMIO24C04C', goods: '토마토 퓨레, 홀 토마토', mode: 'EXW | 해상FCL', amount: '0.5 FEU' },
];

const tabs = ['수출자/화물정보', '의뢰내용', '운송현황', '관련서류', '견적서', '관부가세'];

function RequestList() {
  return (
    <ListPane>
      <PageTitle>수입운송 - 운송</PageTitle>
      <PageLead>운송 진행 단계의 의뢰 목록입니다.</PageLead>
      <Filters onSubmit={(e) => e.preventDefault()}>
        <FilterRow>
          <FilterLabel htmlFor="period">기간</FilterLabel>
          <Field $width={198} $gap={21} $iconColor="#8f8f8f">
            <Select id="period" defaultValue="">
              <option value="">기준일 선택</option>
            </Select>
            <Caret />
          </Field>
          <Field $width={201} $iconRight={18}>
            <TextInput $strong aria-label="시작일" placeholder="시작일" disabled />
            <CalendarIcon />
          </Field>
          <Tilde>~</Tilde>
          <Field $width={201} $iconRight={18}>
            <TextInput $strong aria-label="종료일" placeholder="종료일" disabled />
            <CalendarIcon />
          </Field>
        </FilterRow>
        <FilterRow>
          <FilterLabel htmlFor="keyword-type">검색어</FilterLabel>
          <Field $width={198} $gap={21} $iconColor="#8f8f8f">
            <Select id="keyword-type" defaultValue="">
              <option value="">선택해주세요.</option>
            </Select>
            <Caret />
          </Field>
          <Field $width={322} $gap={10} $iconRight={12}>
            <TextInput aria-label="검색어 입력" placeholder="입력해주세요." disabled />
            <FaSearch size={20} />
          </Field>
          <SearchButton disabled>검색</SearchButton>
        </FilterRow>
      </Filters>

      <TableBox>
        <Table>
          <thead>
            <tr>
              <Th>
                상태
                <SlidersIcon />
              </Th>
              <Th>의뢰정보</Th>
              <Th>품명</Th>
              <Th>운송내용</Th>
              <ThGutter />
            </tr>
          </thead>
          <tbody>
            {rows.map((row) => (
              <Tr key={row.id} $selected={row.selected}>
                <Td>
                  <Badge $dim={row.selected}>{row.status}</Badge>
                  {row.upload && (
                    <UploadLink href="#upload">
                      서류 업로드
                      <Chevron />
                    </UploadLink>
                  )}
                  {row.updated && <Updated>업데이트 : {row.updated}</Updated>}
                </Td>
                <Td>
                  <InfoLine $main>의뢰번호: {row.id}</InfoLine>
                  <InfoLine>BL(AWB): {row.bl}</InfoLine>
                  <InfoLine>PO번호: -</InfoLine>
                </Td>
                <Td>{row.goods}</Td>
                <Td>
                  {row.mode}
                  <br />
                  {row.amount}
                </Td>
              </Tr>
            ))}
            <Tr>
              <Td colSpan={4}>
                <Badge $minWidth={156} />
              </Td>
            </Tr>
          </tbody>
        </Table>
        <Thumb $top={255} $height={235} />
      </TableBox>
    </ListPane>
  );
}

function RouteMap() {
  return (
    <MapBox>
      <WorldMap />
      {LABELS.map(([x, y, text]) => (
        <MapLabel key={text} $x={x} $y={y}>
          {text}
        </MapLabel>
      ))}
      <MapLabel $sea $x={245} $y={855}>
        북대서양
      </MapLabel>
      <Markers viewBox="27 21 2718 1404" preserveAspectRatio="xMidYMid slice" aria-hidden="true">
        <g fill="#df6491" stroke="#b93a69" strokeWidth="6">
          <circle cx="757" cy="578" r="21" />
          <circle cx="2181" cy="847" r="21" />
        </g>
        <path d="M565 764L590 769 612 752 601 823Z" fill="#d6537e" />
      </Markers>
      <PortPopup $x={804} $y={579}>
        <FaAnchor />
        <div>
          출발지
          <br />
          로테르담항
        </div>
      </PortPopup>
      <PortPopup $x={2214} $y={846}>
        <FaAnchor />
        <div>
          도착지
          <br />
          부산항
        </div>
      </PortPopup>
      <ZoomControl>
        <ZoomButton aria-label="확대">
          <svg width="25" height="25" viewBox="0 0 25 25" fill="currentColor">
            <path d="M10 0h5v10h10v5H15v10h-5V15H0v-5h10z" />
          </svg>
        </ZoomButton>
        <ZoomButton aria-label="축소" disabled>
          <svg width="25" height="25" viewBox="0 0 25 25" fill="currentColor">
            <path d="M0 10h25v5H0z" />
          </svg>
        </ZoomButton>
      </ZoomControl>
      <GoogleMark>Google</GoogleMark>
      <Attribution>
        <span>단축키</span>
        <span>지도 데이터 ©2025</span>
        <a href="#terms">약관</a>
      </Attribution>
    </MapBox>
  );
}

function RequestDetail() {
  const [active, setActive] = useState('운송현황');

  return (
    <DetailPane>
      <DetailHead>
        <DetailTitle>의뢰</DetailTitle>
        <Badge>출항 완료</Badge>
        <CloseButton>닫기</CloseButton>
      </DetailHead>
      <Banner href="#documents">
        <span>운송/통관서류를 업로드하세요.</span>
        <span>이동</span>
        <Chevron />
      </Banner>
      <Summary>
        <SummaryItem>
          의뢰번호 : <strong>173890</strong>
        </SummaryItem>
        <SummaryItem>
          BL(AWB)# : <strong>RTMPUS05560</strong>
        </SummaryItem>
        <SummaryItem>
          PO번호# : <strong>-</strong>
        </SummaryItem>
        <Created>의뢰 생성일 : 24. 12. 07.</Created>
      </Summary>
      <Tabs role="tablist">
        {tabs.map((tab) => (
          <Tab key={tab} role="tab" aria-selected={tab === active} $active={tab === active} onClick={() => setActive(tab)}>
            {tab}
            {tab === '관련서류' && <NewDot />}
          </Tab>
        ))}
      </Tabs>
      <Card>
        <VesselRow>
          <span>모선명: AL ZUBARA / 항차: (026E)</span>
          <NoticeButton>
            주의사항
            <NoticeIcon />
          </NoticeButton>
        </VesselRow>
        <Route>
          <Track>
            <Ship />
            <Dashes />
            <EndDot />
          </Track>
          <Ports>
            <Port>
              <strong>
                NLRTM
                <FaInfoCircle />
              </strong>
              (ATD: 24. 12. 31.)
            </Port>
            <Port $align="right">
              <strong>
                KRPUS
                <FaInfoCircle />
              </strong>
              (ETA: 25. 02. 04.)
            </Port>
          </Ports>
        </Route>
        <RouteMap />
        <NextBlock />
        <Thumb $top={4} $height={294} />
      </Card>
    </DetailPane>
  );
}

function App() {
  return (
    <>
      <GlobalStyle />
      <Layout>
        <RequestList />
        <RequestDetail />
      </Layout>
    </>
  );
}

export default App;
